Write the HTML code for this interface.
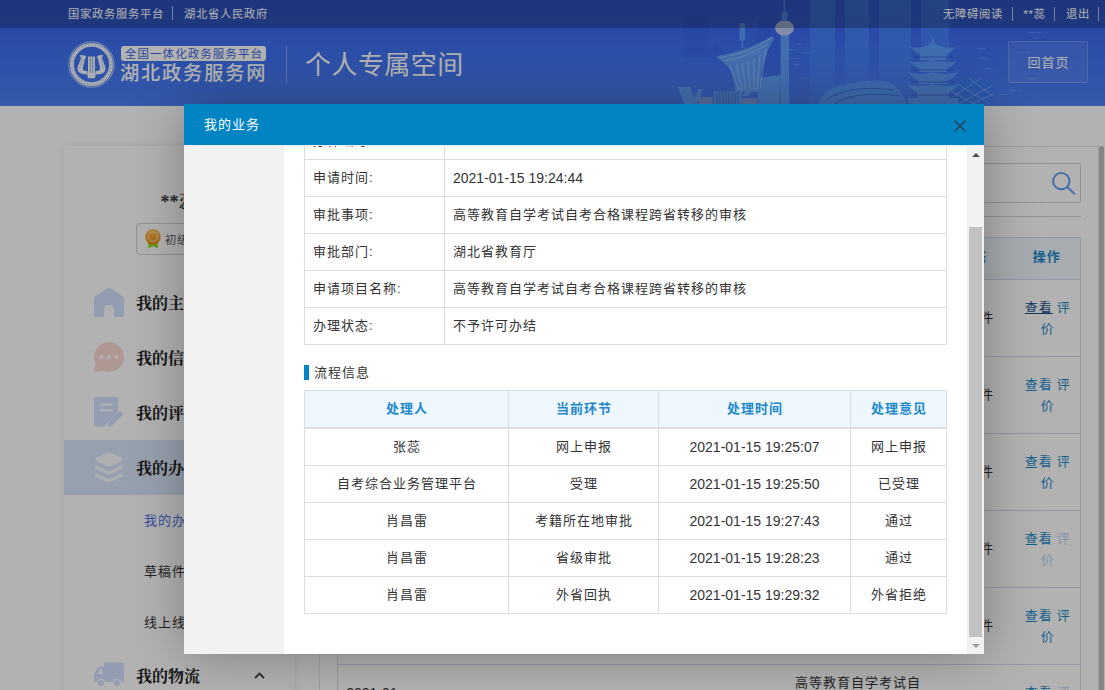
<!DOCTYPE html>
<html lang="zh-CN">
<head>
<meta charset="utf-8">
<title>个人专属空间 - 湖北政务服务网</title>
<style>
*{box-sizing:border-box;margin:0;padding:0}
html,body{width:1105px;height:690px;overflow:hidden}
body{position:relative;background:#fff;font-family:"Liberation Sans","Noto Sans CJK SC",sans-serif;font-size:14px;color:#333}
a{text-decoration:none;color:inherit}
ul{list-style:none}
.abs{position:absolute}

/* ---------- header ---------- */
#hd{position:absolute;left:0;top:0;width:1105px;height:106px;background:linear-gradient(180deg,#3a68f0 0%,#3b6bf0 28%,#4b81f4 100%);overflow:hidden}
#hd .sky{position:absolute;left:0;top:0;width:1105px;height:106px}
#topbar{position:absolute;left:0;top:0;width:1105px;height:28px;background:rgba(0,0,0,.25);color:#fff;font-size:12px;line-height:27px;white-space:nowrap}
#topbar .l{position:absolute;left:68px;top:0}
#topbar .r{position:absolute;left:0;top:0}
#topbar .r a{position:absolute;top:1px}
#topbar .r i{position:absolute;top:7px;margin:0}
#topbar a{position:relative;top:1px;font-size:11.3px;letter-spacing:.7px}
#topbar i{display:inline-block;width:1px;height:14px;background:#fff;opacity:.62;vertical-align:-3px;margin:0 11px 0 8px}
#logo{position:absolute;left:68px;top:41px;width:47px;height:47px}
#slogan{position:absolute;left:121px;top:46px;height:15px;width:145px;border-radius:3px;background:#fff;color:#3d6ae0;font-size:11.5px;line-height:16px;text-align:center;white-space:nowrap;letter-spacing:1.05px;font-weight:400;padding-left:1px}
#site{position:absolute;left:120px;top:61px;font-size:19.2px;line-height:26px;font-weight:500;color:#fff;white-space:nowrap;letter-spacing:1.85px}
#sep{position:absolute;left:286px;top:46px;width:1px;height:37px;background:rgba(255,255,255,.35)}
#ptitle{position:absolute;left:305px;top:46px;font-size:26px;line-height:38px;color:#fff;white-space:nowrap;letter-spacing:.45px}
#home{position:absolute;left:1008px;top:41px;width:80px;height:42px;border:1px solid rgba(255,255,255,.2);border-radius:2px;background:rgba(255,255,255,.07);color:#fff;font-size:13px;letter-spacing:1px;padding-left:1px;line-height:42px;text-align:center}

/* ---------- page ---------- */
#page{position:absolute;left:0;top:0;width:1105px;height:690px;background:#fff;overflow:hidden}
#side{position:absolute;left:64px;top:146px;width:230px;height:600px;background:#fff;box-shadow:0 0 8px rgba(0,0,0,.10)}
#uname{position:absolute;left:0;top:43px;width:229px;text-align:center;font-family:"Liberation Serif","Noto Serif CJK SC",serif;font-size:18px;line-height:26px;font-weight:600;color:#3a3a3a}
#badge{position:absolute;left:72px;top:77px;width:86px;height:32px;border:1px solid #d5d5d5;border-radius:4px;font-size:11.3px;letter-spacing:.7px;line-height:32px;color:#555;padding-left:28px;white-space:nowrap}
#badge svg{position:absolute;left:8px;top:5px;width:16px;height:20px}
.mi{position:absolute;left:0;width:230px;height:55px;font-family:"Liberation Serif","Noto Serif CJK SC",serif;font-size:16px;font-weight:700;line-height:55px;color:#222;padding-left:72px;white-space:nowrap}
.mi svg{position:absolute;left:30px;top:12px;width:30px;height:30px}
.mi{padding-top:1px}
.mi.on{background:#d9e5fb}
.mi .chev{position:absolute;left:190px;top:24px;width:11px;height:7px}
.smi{position:absolute;left:80px;font-size:13px;letter-spacing:1px;line-height:20px;color:#333;white-space:nowrap}
.smi.on{color:#4a76e0}
#main{position:absolute;left:319px;top:146px;width:780px;height:600px;background:#fff;border:1px solid #e4e4e4}
#search{position:absolute;left:480px;top:16px;width:281px;height:40px;border:1px solid #d3d3d3;border-radius:1px}
#search span{position:absolute;left:12px;top:0;line-height:38px;color:#bbb;font-size:13px;letter-spacing:1px}
#search svg{position:absolute;left:249px;top:6px;width:26px;height:26px}
#hr{position:absolute;left:17px;top:69px;width:744px;height:1px;background:#d6d6d6}
#lst{position:absolute;left:17px;top:90px;width:744px;border-collapse:collapse;table-layout:fixed;font-size:14px;color:#333;text-align:center;border:1px solid #d6dcee}
#lst th{font-size:13px;letter-spacing:1px;height:42px;background:#eef6fd;color:#1e88c9;font-weight:bold;border-bottom:1px solid #d6dcee;padding:0 0 3px;line-height:20px}
#lst td{height:77px;border-bottom:1px solid #d6dcee;line-height:20px;padding:0 8px;vertical-align:middle}
#lst td.d{padding:0 7px}
#lst td.op{padding:0 8px 0 10px}
#lst a{color:#1e88c9;font-size:13px;letter-spacing:1px}
#lst a.u{text-decoration:underline;color:#1c5088}
#lst a.dis{color:#b5d6ea}
#pgsb{position:absolute;left:1099px;top:146px;width:5px;height:560px;border-radius:3px;background:#c1c1c1}
/* ---------- overlay + modal ---------- */
#shade{position:absolute;left:0;top:0;width:1105px;height:690px;background:rgba(0,0,0,.3)}
#modal{position:absolute;left:184px;top:104px;width:800px;height:550px;background:#fff;box-shadow:1px 1px 50px rgba(0,0,0,.3)}
#mtitle{position:absolute;left:0;top:0;width:800px;height:42px;background:#0084c4;border-bottom:1px solid #eee;color:#fff;font-size:13px;letter-spacing:1px;line-height:41px;padding-left:20px}
#mclose{position:absolute;left:770px;top:16px;width:12px;height:12px}
#mbody{position:absolute;left:0;top:42px;width:800px;height:508px;background:#f2f2f2;overflow:hidden}
#mwhite{position:absolute;left:100px;top:0;width:683px;height:508px;background:#fff}
#sb{position:absolute;left:783px;top:0;width:17px;height:508px;background:#f1f1f1}
#sb .th{position:absolute;left:2px;top:81px;width:13px;height:410px;background:#c1c1c1}

.c{font-size:13px;letter-spacing:1px}
#ft td.c{padding-left:1px}
#ft tr:nth-child(2) td{height:38px}
/* modal content */
#dt{position:absolute;left:20px;top:-24px;width:643px;border-collapse:collapse;table-layout:fixed;font-size:14px;color:#333}
#dt td{border:1px solid #ddd;height:37px;padding:0 8px;line-height:20px;vertical-align:middle;white-space:nowrap}
#dt td.k{width:140px;font-size:13px;letter-spacing:1px}
#ft-t{position:absolute;left:20px;top:219px;height:15px;border-left:5px solid #0084c4;padding-left:5px;font-size:13px;letter-spacing:1px;line-height:15px;color:#333;white-space:nowrap}
#ft{position:absolute;left:20px;top:244px;width:643px;border-collapse:collapse;table-layout:fixed;font-size:14px;color:#333;text-align:center}
#ft td,#ft th{border:1px solid #ddd;height:37px;padding:0;line-height:20px;vertical-align:middle;white-space:nowrap}
#ft th{font-size:13px;letter-spacing:1px;height:37px;padding:1px 0 0 1px;background:#eef6fe;color:#1e88c9;font-weight:bold;border-bottom:2px solid #ddd}
#sb .up,#sb .dn{position:absolute;left:5px;width:0;height:0;border-left:4px solid transparent;border-right:4px solid transparent}
#sb .up{top:7px;border-bottom:4px solid #505050}
#sb .dn{top:498px;border-top:4px solid #a3a3a3}
</style>
</head>
<body>
<div id="page">
  <div id="side">
    <div id="uname">**蕊</div>
    <div id="badge"><svg viewBox="0 0 16 20"><defs><linearGradient id="md" x1="0" y1="0" x2="0" y2="1"><stop offset="0" stop-color="#ffc562"/><stop offset="1" stop-color="#f08a08"/></linearGradient><linearGradient id="rb" x1="0" y1="0" x2="0" y2="1"><stop offset="0" stop-color="#7cc416"/><stop offset="1" stop-color="#a6e23a"/></linearGradient></defs><path d="M3.2 11 L3.2 19.6 L8 17.2 L12.8 19.6 L12.8 11 Z" fill="url(#rb)"/><circle cx="8" cy="7.7" r="7.7" fill="url(#md)"/><circle cx="8" cy="7.7" r="4.7" fill="none" stroke="#ffe0b0" stroke-width="1.2" opacity=".85"/></svg>初级实名</div>
    <div class="mi" style="top:129px"><svg viewBox="0 0 30 30"><path d="M13.6 0.9 Q15 -0.1 16.4 0.9 L29 9.6 Q30 10.4 30 11.8 V28 Q30 30 28 30 H20 V23 Q20 18 15 18 Q10 18 10 23 V30 H2 Q0 30 0 28 V11.8 Q0 10.4 1 9.6 Z" fill="#d3e1fe"/></svg>我的主页</div>
    <div class="mi" style="top:184px"><svg viewBox="0 0 30 30"><path d="M15 0 A15 15 0 1 1 9 28.8 Q7 29.8 1.2 29.8 Q0 29.8 0.2 28.6 L1.6 21.8 A15 15 0 0 1 15 0 Z" fill="#fbd8d2"/><circle cx="7.6" cy="15" r="2.3" fill="#fff" opacity=".85"/><circle cx="15" cy="15" r="2.3" fill="#fff" opacity=".85"/><circle cx="22.4" cy="15" r="2.3" fill="#fff" opacity=".85"/></svg>我的信息</div>
    <div class="mi" style="top:239px"><svg viewBox="0 0 30 30"><path d="M2.5 0 H21.5 Q24 0 24 2.5 V15 L11 28 L10.6 29.5 H2.5 Q0 29.5 0 27 V2.5 Q0 0 2.5 0 Z" fill="#d3e1fe"/><rect x="5.8" y="6.2" width="13" height="2.6" rx="1.3" fill="#fff" opacity=".8"/><rect x="5.8" y="12" width="13" height="2.6" rx="1.3" fill="#fff" opacity=".8"/><path d="M13.2 30 L14.2 25.6 L25.2 14.6 Q26.2 13.8 27.2 14.6 L28.6 16 Q29.4 17 28.6 18 L17.6 29 Z" fill="#d3e1fe"/></svg>我的评价</div>
    <div class="mi on" style="top:294px"><svg viewBox="0 0 30 30"><path d="M13 0.8 Q15 0 17 0.8 L27.6 5.8 Q29.6 7.4 27.6 9 L17 14 Q15 14.8 13 14 L2.4 9 Q0.4 7.4 2.4 5.8 Z" fill="#fbfcff"/><path d="M2.6 15.4 L13.4 20.6 Q15 21.3 16.6 20.6 L27.4 15.4" fill="none" stroke="#fbfcff" stroke-width="3" stroke-linecap="round"/><path d="M2.6 23.4 L13.4 28.4 Q15 29.1 16.6 28.4 L27.4 23.4" fill="none" stroke="#fbfcff" stroke-width="3" stroke-linecap="round"/></svg>我的办件</div>
    <div class="smi on" style="top:365px">我的办件</div>
    <div class="smi" style="top:416px">草稿件</div>
    <div class="smi" style="top:467px">线上线下</div>
    <div class="mi" style="top:502px"><svg viewBox="0 0 30 30" style="top:11px"><path d="M10 3.5 H28 Q30 3.5 30 5.5 V23 H0 V15 L4 8.5 Q4.6 7.5 6 7.5 H10 Z" fill="#d3e1fe"/><path d="M3.5 15 L6.5 10 H8.5 V15 Z" fill="#fff"/><circle cx="7" cy="24" r="3.6" fill="#d3e1fe" stroke="#fff" stroke-width="1.2"/><circle cx="23" cy="24" r="3.6" fill="#d3e1fe" stroke="#fff" stroke-width="1.2"/></svg>我的物流<svg class="chev" viewBox="0 0 11 7"><path d="M1 6 L5.5 1.5 L10 6" fill="none" stroke="#444" stroke-width="1.8"/></svg></div>
  </div>
  <div id="main">
    <div id="search"><span>请输入事项名称</span><svg viewBox="0 0 26 26"><circle cx="11.3" cy="11.1" r="8.2" fill="none" stroke="#5c9ff5" stroke-width="1.9"/><path d="M17.3 17 L24.2 23.6" stroke="#5c9ff5" stroke-width="2" stroke-linecap="round" fill="none"/></svg></div>
    <div id="hr"></div>
    <table id="lst">
      <colgroup><col style="width:73px"><col style="width:200px"><col style="width:173px"><col style="width:149px"><col style="width:81px"><col></colgroup>
      <tr><th>申请日期</th><th>办件编号</th><th>审批部门</th><th>事项名称</th><th>状态</th><th>操作</th></tr>
      <tr><td class="d">2021-01-15</td><td>420000202101150001</td><td class="c">湖北省教育厅</td><td class="c">高等教育自学考试自考合格课程跨省转移的审核</td><td class="c">办结件</td><td class="op"><a class="u">查看</a> <a>评价</a></td></tr>
      <tr><td class="d">2021-01-14</td><td>420000202101140002</td><td class="c">湖北省教育厅</td><td class="c">高等教育自学考试自考合格课程跨省转移的审核</td><td class="c">办结件</td><td class="op"><a>查看</a> <a>评价</a></td></tr>
      <tr><td class="d">2021-01-13</td><td>420000202101130003</td><td class="c">湖北省教育厅</td><td class="c">高等教育自学考试自考合格课程跨省转移的审核</td><td class="c">办结件</td><td class="op"><a>查看</a> <a>评价</a></td></tr>
      <tr><td class="d">2021-01-12</td><td>420000202101120004</td><td class="c">湖北省教育厅</td><td class="c">高等教育自学考试自考合格课程跨省转移的审核</td><td class="c">办结件</td><td class="op"><a>查看</a> <a class="dis">评价</a></td></tr>
      <tr><td class="d">2021-01-11</td><td>420000202101110005</td><td class="c">湖北省教育厅</td><td class="c">高等教育自学考试自考合格课程跨省转移的审核</td><td class="c">办结件</td><td class="op"><a>查看</a> <a>评价</a></td></tr>
      <tr><td class="d">2021-01-10</td><td>420000202101100006</td><td class="c">湖北省教育厅</td><td class="c">高等教育自学考试自考合格课程跨省转移的审核</td><td class="c">办结件</td><td class="op"><a>查看</a> <a class="dis">评价</a></td></tr>
    </table>
  </div>
  <div id="pgsb"></div>
</div>
<div id="hd">
  <svg class="sky" viewBox="0 0 1105 106">
    <defs>
      <linearGradient id="gA" x1="0" y1="0" x2="0" y2="1"><stop offset="0" stop-color="#4f93ff" stop-opacity=".55"/><stop offset="1" stop-color="#4f93ff" stop-opacity=".3"/></linearGradient>
      <linearGradient id="gB" x1="0" y1="0" x2="1" y2="0"><stop offset="0" stop-color="#5a9cff"/><stop offset="1" stop-color="#a9c6f5"/></linearGradient>
    </defs>
    <g fill="url(#gA)">
      <rect x="810" y="0" width="25" height="104"/>
      <rect x="845" y="0" width="24" height="98"/>
      <rect x="879" y="0" width="32" height="100"/>
      <rect x="921" y="0" width="28" height="62"/>
    </g>
    <g fill="#3055d8" opacity=".2">
      <rect x="683" y="14" width="26" height="44"/>
      <path d="M704 58 L716 42 L728 58 Z"/>
      <rect x="757" y="18" width="24" height="60"/>
    </g>
    <g fill="#68aaff" opacity=".8">
      <rect x="783.6" y="0" width="1.3" height="12"/>
      <rect x="781.6" y="12" width="5.8" height="8"/>
      <rect x="780.6" y="34" width="8.4" height="72"/>
      <rect x="739.6" y="23" width="5.4" height="18" rx="2.7"/>
      <rect x="741.8" y="40" width="1.2" height="8"/>
      <path d="M717 56 Q746 52 772 36 L774 38.5 Q762 58 758 92 L735 92 Q736 68 717 58 Z"/>
      <path d="M757 78 L781 75 L779 106 L758 106 Z"/>
      <path d="M678 87 L690 87 L694 98 L699 89 L703 89 L697 104 L684 104 Z"/>
      <rect x="714" y="91" width="28" height="13"/>
      <path d="M742 96 L758 78 L759 82 L748 96 Z"/>
    </g>
    <ellipse cx="784.5" cy="28" rx="9.5" ry="7.6" fill="#c9d6f2" opacity=".9"/>
    <g fill="#9fb0d8" opacity=".6">
      <rect x="699" y="97" width="14" height="7"/>
      <rect x="742" y="98" width="15" height="6"/>
    </g>
    <g fill="#5fa4ff" opacity=".7">
      <path d="M818 104 Q826 86 846 85 Q870 78 888 82 Q902 88 906 104 Z"/>
    </g>
    <path d="M952 104 Q951 84 966 79 Q984 77 993 86 L993 104 Z" fill="#3a7cf0" opacity=".75"/>
    <g fill="#66a8ff" opacity=".72">
      <path d="M932 38 L934 38 L934 43 L932 43 Z"/>
      <path d="M910 47 Q922 50 933 42 Q944 50 956 47 Q950 54 946 54 L946 60 L920 60 L920 54 Q916 54 910 47 Z"/>
      <path d="M909 61 Q920 64 933 60 Q946 64 957 61 Q951 68 947 68 L947 72 L919 72 L919 68 Q915 68 909 61 Z"/>
      <path d="M908 72 Q920 76 933 72 Q946 76 958 72 Q952 80 948 80 L948 84 L918 84 L918 80 Q914 80 908 72 Z"/>
      <path d="M907 84 Q920 88 933 84 Q946 88 959 84 Q953 92 949 92 L949 98 L917 98 L917 92 Q913 92 907 84 Z"/>
      <rect x="908" y="98" width="50" height="6"/>
    </g>
    <g stroke="#c4d8fa" stroke-width=".9" fill="none" opacity=".55">
      <path d="M720 57.5 Q746 54 771 38.5 M724 61 Q746 58 768 44"/>
      <path d="M730 66 L739 90 M736 64 L742 90 M742 63 L746 90 M748 61 L750 90 M754 58 L754 90 M760 54 L757 90 M766 49 L760 88"/>
    </g>
    <g stroke="#2c4fc0" stroke-width="1" fill="none" opacity=".55">
      <path d="M717 91 V104 M720 91 V104 M723 91 V104 M726 91 V104 M729 91 V104 M732 91 V104 M735 91 V104 M738 91 V104"/>
      <path d="M826 100 Q850 84 894 90 M834 104 Q856 90 900 96"/>
      <path d="M914 57 H952 M913 70 H953 M912 82 H954 M911 95 H955"/>
    </g>
    <g stroke="#8fc0ff" stroke-width="1" fill="none" opacity=".6">
      <path d="M954 96 L980 79 M958 104 L992 86 M972 104 L993 94 M958 84 L990 104 M952 92 L974 104 M970 79 L993 96"/>
    </g>
    <g fill="#7fb4ff" opacity=".35">
      <rect x="790" y="58" width="9" height="1.2"/><rect x="793" y="64" width="7" height="1.2"/><rect x="797" y="43" width="5" height="1.2"/><rect x="802" y="52" width="9" height="1.2"/><rect x="788" y="49" width="8" height="1.2"/><rect x="800" y="78" width="7" height="1.2"/>
      <rect x="1028" y="32" width="14" height="1.2"/><rect x="1032" y="37" width="6" height="1.2"/><rect x="1020" y="52" width="10" height="1.2"/><rect x="1028" y="78" width="8" height="1.2"/><rect x="1010" y="90" width="12" height="1.2"/><rect x="1000" y="94" width="8" height="1.2"/>
      <rect x="978" y="48" width="8" height="1.2"/><rect x="980" y="58" width="6" height="1.2"/><rect x="985" y="68" width="5" height="1.2"/>
    </g>
  </svg>
  <div id="topbar">
    <div class="l"><a>国家政务服务平台</a><i></i><a>湖北省人民政府</a></div>
    <div class="r"><a style="left:943px">无障碍阅读</a><i style="left:1012px"></i><a style="left:1023.5px">**蕊</a><i style="left:1054px"></i><a style="left:1066px">退出</a><i style="left:1098px"></i></div>
  </div>
  <svg id="logo" viewBox="0 0 47 47">
    <circle cx="23.5" cy="23.5" r="22.7" fill="none" stroke="#fff" stroke-width=".9" opacity=".7"/>
    <circle cx="23.5" cy="23.5" r="19.6" fill="none" stroke="#fff" stroke-width="3.9" opacity=".93"/>
    <circle cx="23.5" cy="23.5" r="19.6" fill="none" stroke="#3d6ae0" stroke-width="1.4" stroke-dasharray="1 2.4" opacity=".35"/>
    <g fill="#fff" opacity=".96">
      <path d="M11.6 14.2 Q16.4 13.2 18.4 15.9 Q17.2 16.4 16.8 18.6 Q16.4 22 15 26 Q14.4 29 16.6 29.8 L19.6 30.2 L19.6 33.6 Q14 33.8 11 31.5 Q8.6 29 10 25 Q11.4 21.5 12.6 18.4 Q13.2 15.6 11.6 14.2 Z"/>
      <path d="M35.4 14.2 Q30.6 13.2 28.6 15.9 Q29.8 16.4 30.2 18.6 Q30.6 22 32 26 Q32.6 29 30.4 29.8 L27.4 30.2 L27.4 33.6 Q33 33.8 36 31.5 Q38.4 29 37 25 Q35.6 21.5 34.4 18.4 Q33.8 15.6 35.4 14.2 Z"/>
      <rect x="20" y="15.6" width="7" height="18"/>
      <path d="M19.2 33 H27.8 L27 37.2 H20 Z"/>
    </g>
    <path d="M22.3 16.4 V32 M24.7 16.4 V32" stroke="#3d6ae0" stroke-width=".7" fill="none" opacity=".8"/>
    <path d="M13.6 16 Q14.6 18 13.6 21 Q12.2 25 11.6 28" stroke="#3d6ae0" stroke-width=".5" fill="none" opacity=".6"/>
    <path d="M33.4 16 Q32.4 18 33.4 21 Q34.8 25 35.4 28" stroke="#3d6ae0" stroke-width=".5" fill="none" opacity=".6"/>
  </svg>
  <div id="slogan">全国一体化政务服务平台</div>
  <div id="site">湖北政务服务网</div>
  <div id="sep"></div>
  <div id="ptitle">个人专属空间</div>
  <div id="home">回首页</div>
</div>
<div id="shade"></div>
<div id="modal">
  <div id="mtitle">我的业务</div>
  <svg id="mclose" viewBox="0 0 12 12"><path d="M0.7 0.7 L11.3 11.3 M11.3 0.7 L0.7 11.3" stroke="#2e3a4a" stroke-width="1.4" fill="none"/></svg>
  <div id="mbody">
    <div id="mwhite">
      <table id="dt">
        <colgroup><col style="width:140px"><col></colgroup>
        <tr><td class="k">办件编号:</td><td>420000-0000-2021-0115-1924</td></tr>
        <tr><td class="k">申请时间:</td><td>2021-01-15 19:24:44</td></tr>
        <tr><td class="k">审批事项:</td><td class="c">高等教育自学考试自考合格课程跨省转移的审核</td></tr>
        <tr><td class="k">审批部门:</td><td class="c">湖北省教育厅</td></tr>
        <tr><td class="k">申请项目名称:</td><td class="c">高等教育自学考试自考合格课程跨省转移的审核</td></tr>
        <tr><td class="k">办理状态:</td><td class="c">不予许可办结</td></tr>
      </table>
      <div id="ft-t">流程信息</div>
      <table id="ft">
        <colgroup><col style="width:204px"><col style="width:150px"><col style="width:192px"><col></colgroup>
        <tr><th>处理人</th><th>当前环节</th><th>处理时间</th><th>处理意见</th></tr>
        <tr><td class="c">张蕊</td><td class="c">网上申报</td><td>2021-01-15 19:25:07</td><td class="c">网上申报</td></tr>
        <tr><td class="c">自考综合业务管理平台</td><td class="c">受理</td><td>2021-01-15 19:25:50</td><td class="c">已受理</td></tr>
        <tr><td class="c">肖昌雷</td><td class="c">考籍所在地审批</td><td>2021-01-15 19:27:43</td><td class="c">通过</td></tr>
        <tr><td class="c">肖昌雷</td><td class="c">省级审批</td><td>2021-01-15 19:28:23</td><td class="c">通过</td></tr>
        <tr><td class="c">肖昌雷</td><td class="c">外省回执</td><td>2021-01-15 19:29:32</td><td class="c">外省拒绝</td></tr>
      </table>
    </div>
    <div id="sb"><div class="up"></div><div class="th"></div><div class="dn"></div></div>
  </div>
</div>
</body>
</html>
